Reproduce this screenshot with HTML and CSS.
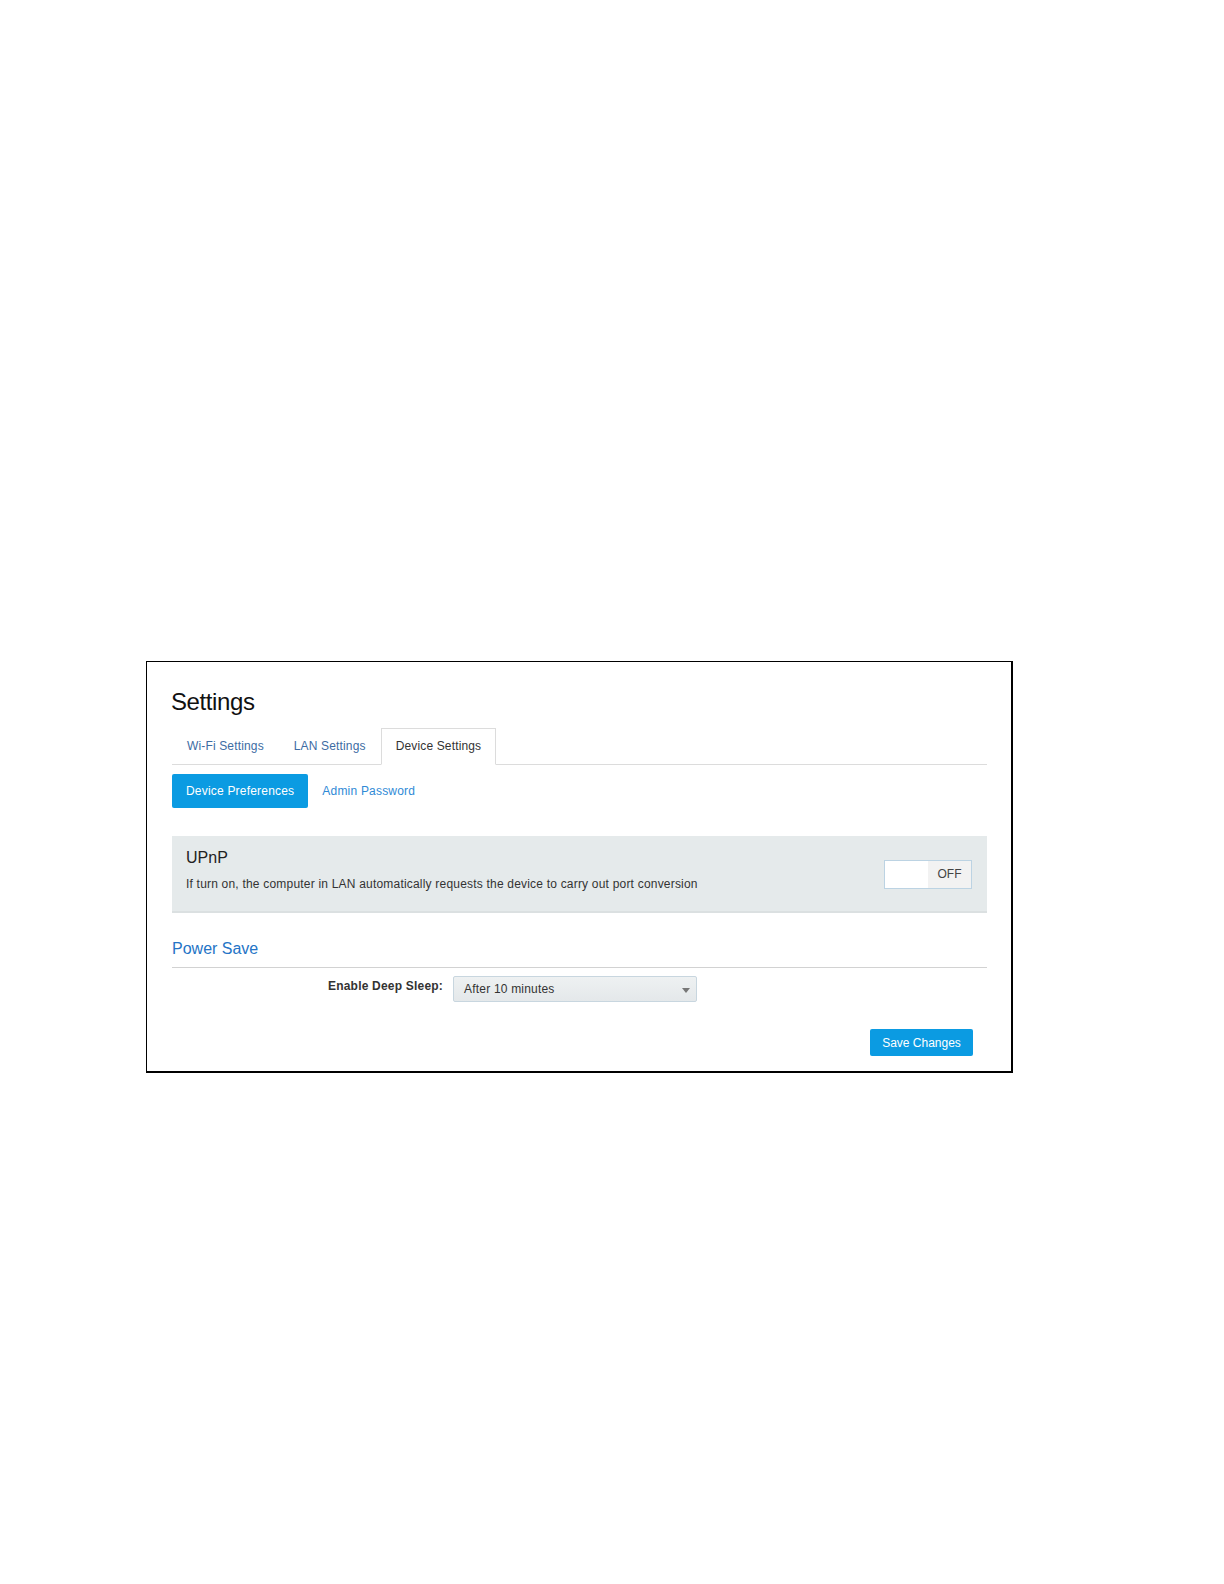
FILE: index.html
```html
<!DOCTYPE html>
<html lang="en">
<head>
    <meta charset="UTF-8">
    <meta name="viewport" content="width=device-width, initial-scale=1.0">
    <title>Settings</title>
    <link rel="stylesheet" href="styles.css">
</head>
<body>

    <div id="frame">
        <h1 class="title">Settings</h1>

        <!-- Top level tabs -->
        <ul class="tabs">
            <li class="tab"><a href="#">Wi-Fi Settings</a></li>
            <li class="tab"><a href="#">LAN Settings</a></li>
            <li class="tab active"><a href="#">Device Settings</a></li>
        </ul>

        <!-- Sub pages -->
        <ul class="pills">
            <li class="pill active"><a href="#">Device Preferences</a></li>
            <li class="pill"><a href="#">Admin Password</a></li>
        </ul>

        <div class="panel">
            <div class="panel-text">
                <div class="panel-title">UPnP</div>
                <div class="panel-desc">If turn on, the computer in LAN automatically requests the device to carry out port conversion</div>
            </div>
            <div class="toggle">
                <span class="toggle-on"></span>
                <span class="toggle-off">OFF</span>
            </div>
        </div>

        <h2 class="section-title">Power Save</h2>

        <div class="form-row">
            <label class="form-label">Enable Deep Sleep:</label>
            <div class="select">
                <span>After 10 minutes</span>
                <span class="caret"></span>
            </div>
        </div>

        <div class="actions">
            <button class="btn-save">Save Changes</button>
        </div>
    </div>

</body>
</html>
```

FILE: styles.css
```css
body {
    font-family: "Liberation Sans", Arial, sans-serif;
    background-color: #fff;
    color: #333;
    margin: 0;
}
#frame {
    margin: 661px 0 0 146px;
    width: 815px;
    padding: 26px 24px 15px 25px;
    border: 1px solid #000;
    border-right-width: 2px;
    border-bottom-width: 2px;
}
.title {
    margin: 0 0 13px -1px;
    font-size: 24px;
    line-height: 27px;
    letter-spacing: -0.4px;
    font-weight: normal;
    color: #111;
}
.tabs, .pills {
    list-style: none;
    margin: 0;
    padding: 0;
    display: flex;
}
.tabs {
    border-bottom: 1px solid #dcdcdc;
}
.tab {
    margin: 0 0 -1px 0;
}
.tab a {
    display: block;
    padding: 9px 14px;
    font-size: 12px;
    line-height: 17px;
    letter-spacing: 0.15px;
    color: #3d6ca3;
    text-decoration: none;
    border: 1px solid transparent;
}
.tab.active a {
    color: #333;
    background-color: #fff;
    border-color: #dcdcdc;
    border-bottom-color: #fff;
}
.pills {
    margin-top: 9px;
}
.pill a {
    display: block;
    padding: 8px 14px;
    font-size: 12px;
    line-height: 18px;
    letter-spacing: 0.2px;
    color: #2f8ad6;
    text-decoration: none;
    border-radius: 2px;
}
.pill.active a {
    background-color: #0b9be2;
    color: #fff;
}
.panel {
    margin-top: 28px;
    height: 45px;
    padding: 12px 15px 18px 14px;
    background-color: #e5eaeb;
    border-bottom: 2px solid #dbe0e1;
    display: flex;
    justify-content: space-between;
    align-items: center;
}
.panel-title {
    font-size: 16px;
    line-height: 20px;
    color: #222;
}
.panel-desc {
    margin-top: 8px;
    font-size: 12px;
    line-height: 17px;
    letter-spacing: 0.2px;
    color: #333;
}
.toggle {
    display: flex;
    margin-top: 7px;
    height: 27px;
    border: 1px solid #bcd3e3;
}
.toggle-on {
    width: 43px;
    background-color: #fff;
}
.toggle-off {
    width: 43px;
    background-color: #f2f2f2;
    font-size: 12px;
    line-height: 27px;
    text-align: center;
    color: #444;
}
.section-title {
    margin: 26px 0 0 0;
    padding-bottom: 8px;
    font-size: 16px;
    line-height: 20px;
    font-weight: normal;
    color: #2474c6;
    border-bottom: 1px solid #d2d2d2;
}
.form-row {
    margin-top: 8px;
    display: flex;
    align-items: center;
}
.form-label {
    width: 271px;
    text-align: right;
    font-size: 12px;
    font-weight: bold;
    letter-spacing: 0.2px;
    color: #333;
    margin-top: -7px;
}
.select {
    margin-left: 10px;
    width: 226px;
    height: 24px;
    padding: 0 6px 0 10px;
    border: 1px solid #c8d6df;
    border-radius: 2px;
    background: linear-gradient(#eef1f2, #e4e8ea);
    font-size: 12px;
    line-height: 24px;
    letter-spacing: 0.2px;
    color: #333;
    display: flex;
    justify-content: space-between;
    align-items: center;
}
.caret {
    width: 0;
    height: 0;
    border-left: 4px solid transparent;
    border-right: 4px solid transparent;
    border-top: 5px solid #777;
    margin-top: 2px;
}
.actions {
    margin-top: 27px;
    display: flex;
    justify-content: flex-end;
    padding-right: 14px;
}
.btn-save {
    width: 103px;
    height: 27px;
    padding: 0;
    background-color: #0b9be2;
    color: #fff;
    border: none;
    border-radius: 2px;
    font-family: "Liberation Sans", Arial, sans-serif;
    font-size: 12px;
    cursor: pointer;
}
```
